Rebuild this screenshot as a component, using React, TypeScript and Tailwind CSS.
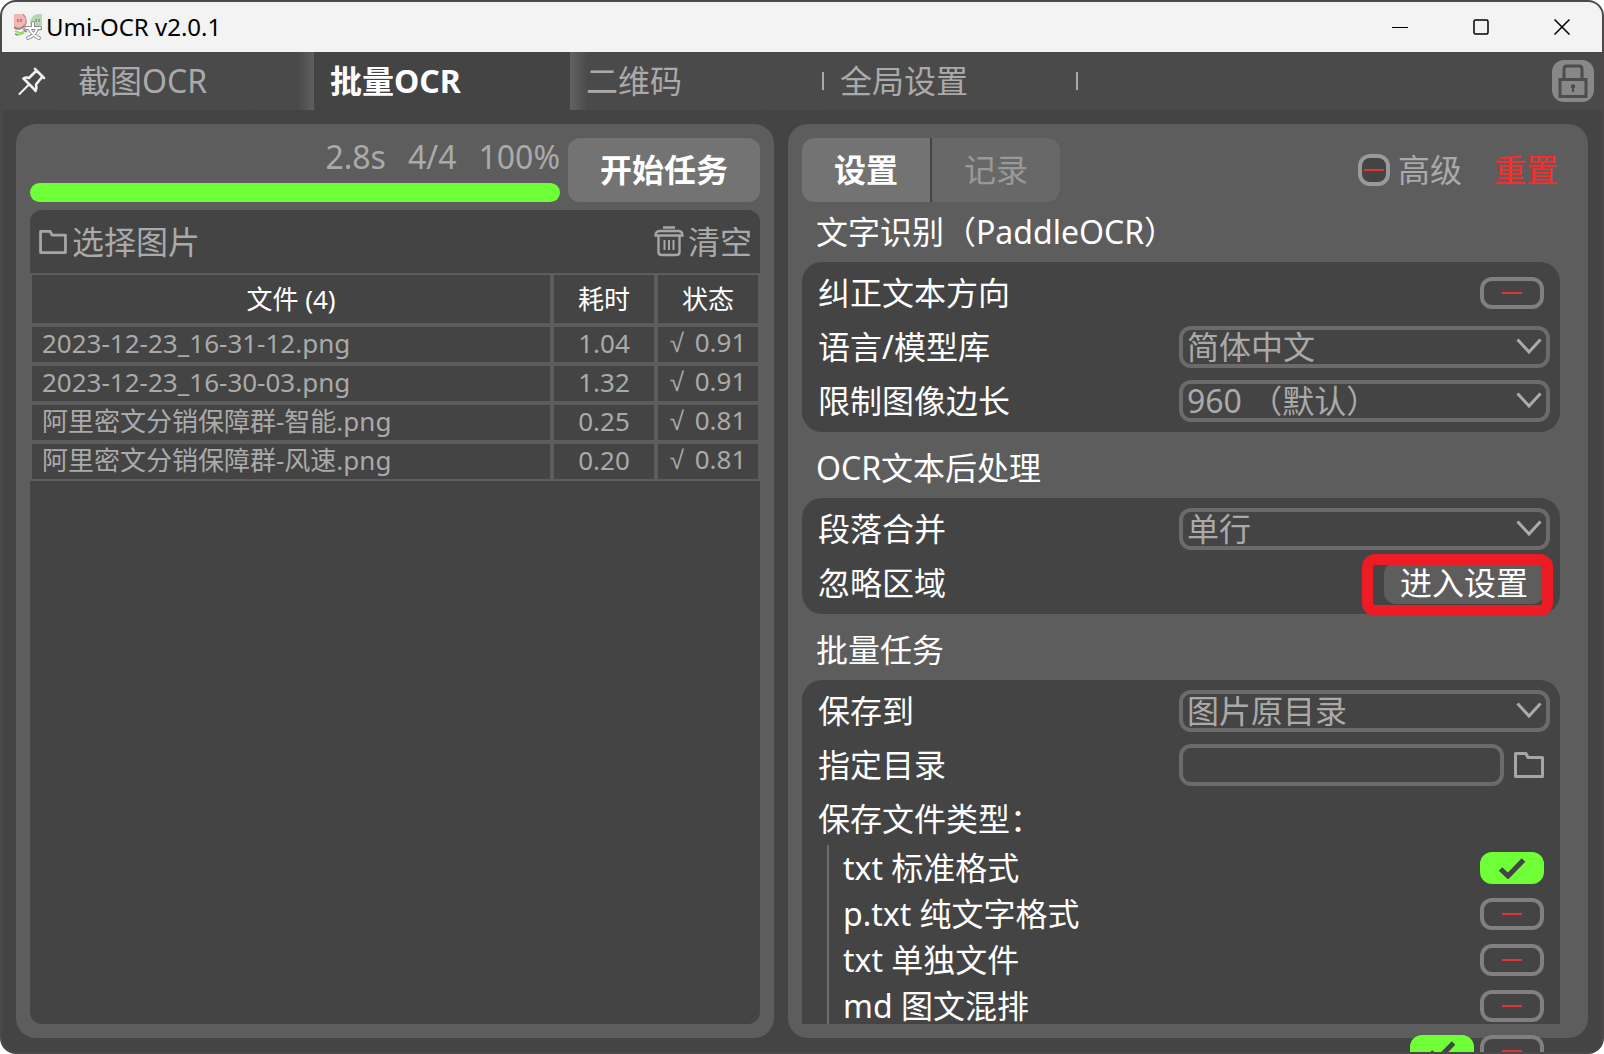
import { useState } from "react";
import type { ReactNode } from "react";
import clsx from "clsx";

const tabs = ["截图OCR", "批量OCR", "二维码", "全局设置"];

const files = [
  { name: "2023-12-23_16-31-12.png", time: "1.04", score: "0.91" },
  { name: "2023-12-23_16-30-03.png", time: "1.32", score: "0.91" },
  { name: "阿里密文分销保障群-智能.png", time: "0.25", score: "0.81" },
  { name: "阿里密文分销保障群-风速.png", time: "0.20", score: "0.81" },
];

const fileTypes = [
  { id: "txt", label: "txt 标准格式", on: true },
  { id: "ptxt", label: "p.txt 纯文字格式", on: false },
  { id: "single", label: "txt 单独文件", on: false },
  { id: "md", label: "md 图文混排", on: false },
];

function AppLogo() {
  return (
    <svg viewBox="0 0 28 26" className="h-[26px] w-7">
      <path d="M0 0h9c3 3 4 8 2 12-2 3-6 4-11 3z" fill="#f5b5b1" />
      <path d="M0 13c4 3 8 2 11-2" fill="none" stroke="#a07c78" strokeWidth="2" />
      <path d="M9 0c4 4 4 9 1 13" fill="none" stroke="#b98f8b" strokeWidth="1.2" />
      <path d="M28 0h-3c-6 0-9 5-9 9 1 4 5 6 12 7z" fill="#b3d8b2" />
      <path d="M17 12c3 4 7 4 11 3" fill="none" stroke="#7f9a80" strokeWidth="2" />
      <path d="M4 5v3M7 5v3" stroke="#8a6666" strokeWidth="1.2" />
      <path d="M22 5v3M25 5v3" stroke="#76917a" strokeWidth="1.2" />
      <path d="M1 17l5 2 6-2M4 21l6-2" stroke="#8edb63" strokeWidth="1.8" fill="none" />
      <path d="M1 20l3 1M9 15l4 3" stroke="#8d8080" strokeWidth="1.4" fill="none" />
      <g fill="none" strokeLinecap="round">
        <path d="M19 9v4M12 14h14M14 24c6-2 8-6 9-10M25 24c-5-2-8-6-10-10" stroke="#8e8e8e" strokeWidth="3.8" />
        <path d="M19 9v4M12 14h14M14 24c6-2 8-6 9-10M25 24c-5-2-8-6-10-10" stroke="#ffffff" strokeWidth="2" />
      </g>
    </svg>
  );
}

function PinIcon() {
  return (
    <svg viewBox="0 0 28 28" className="size-7" fill="none" stroke="#f2f2f2" strokeWidth="2.6" strokeLinejoin="round" strokeLinecap="round">
      <path d="M17 2l9 9M18.500 3.500L11 11M24.500 9.500L18 17.500M5.500 11.500c2-1.200 4-1.200 5.500-.5M5.500 11.500l12 12M18 17.500c.8 2.500.6 4.500-.5 6.500" />
      <path d="M11 17.500L1.500 27" strokeWidth="2" />
    </svg>
  );
}

function LockIcon() {
  return (
    <svg viewBox="0 0 30 34" className="h-[34px] w-[30px]" fill="none" stroke="#4d4d4d" strokeWidth="3">
      <path d="M6 15V5q0-3 3-3h12q3 0 3 3v10" />
      <path d="M2 15.500h26v17H2z" />
      <path d="M15 22v6" strokeWidth="2" />
      <circle cx="15" cy="22.500" r="1.500" fill="#4d4d4d" strokeWidth="1.500" />
    </svg>
  );
}

function FolderIcon({ className }: { className?: string }) {
  return (
    <svg viewBox="0 0 30 26" className={className} fill="none" stroke="#a6a6a6" strokeWidth="3">
      <path d="M1.500 24.500v-23h10.500l2 4h14.500v19z" strokeLinejoin="round" />
    </svg>
  );
}

function TrashIcon() {
  return (
    <svg viewBox="0 0 30 31" className="h-[31px] w-[30px]" fill="none" stroke="#a6a6a6" strokeWidth="2.400">
      <path d="M9 1.500h12M1.500 9.500Q1.500 5 6 5h18q4.500 0 4.500 4.500zM4.500 10v16q0 3 3 3h15q3 0 3-3V10" />
      <path d="M10.500 14v10M15 14v10M19.500 14v10" strokeWidth="2" />
    </svg>
  );
}

function Toggle({ id, label, defaultOn = false, square = false }: { id: string; label?: string; defaultOn?: boolean; square?: boolean }) {
  const [on, setOn] = useState(defaultOn);
  return (
    <span className={clsx("grid h-8 shrink-0 place-items-center", square ? "w-8" : "w-16")}>
      <input
        id={id}
        type="checkbox"
        aria-label={label}
        checked={on}
        onChange={(e) => setOn(e.target.checked)}
        className={clsx(
          "col-start-1 row-start-1 size-full appearance-none rounded-xl border-4",
          on ? "border-[#6eff36] bg-[#6eff36]" : "bg-[#444]",
          !on && (square ? "border-[#999]" : "border-[#808080]"),
        )}
      />
      {on ? (
        <svg viewBox="0 0 28 22" className="pointer-events-none col-start-1 row-start-1 h-[22px] w-7" fill="none" stroke="#444" strokeWidth="5">
          <path d="M2.500 12l7.500 7L25.500 3" />
        </svg>
      ) : (
        <span className="pointer-events-none col-start-1 row-start-1 h-0.5 w-5 bg-[#e03535]" />
      )}
    </span>
  );
}

function Picker({ id, options }: { id: string; options: string[] }) {
  return (
    <div className="relative w-[calc(50%+5px)]">
      <select id={id} className="block h-[42px] w-full appearance-none rounded-xl border-4 border-[#6b6b6b] bg-[#444] pl-1 text-[32px] leading-8 text-[#aaa] outline-none">
        {options.map((option) => <option key={option}>{option}</option>)}
      </select>
      <svg viewBox="0 0 26 17" className="pointer-events-none absolute top-3 right-2 h-[17px] w-[26px]" fill="none" stroke="#aaa" strokeWidth="3">
        <path d="M1.500 1.500L13 14 24.500 1.500" />
      </svg>
    </div>
  );
}

function Row({ htmlFor, label, wide, children }: { htmlFor?: string; label: string; wide?: boolean; children?: ReactNode }) {
  return (
    <div className={clsx("flex h-[54px] items-center justify-between pl-4", wide ? "pr-2.5" : "pr-4")}>
      <label htmlFor={htmlFor}>{label}</label>
      {children}
    </div>
  );
}

function Section({ title, first, children }: { title: string; first?: boolean; children: ReactNode }) {
  return (
    <section className={clsx(!first && "mt-1.5")}>
      <h2 className="flex h-[60px] items-center pl-3.5">{title}</h2>
      <div className="rounded-[20px] bg-[#444] pt-1 pb-1">{children}</div>
    </section>
  );
}

function TitleBar() {
  return (
    <header className="flex h-[50px] shrink-0 items-center bg-[#f3f3f3] pl-3 text-black">
      <AppLogo />
      <h1 className="ml-1 flex-1 text-2xl">Umi-OCR v2.0.1</h1>
      <button aria-label="最小化" className="grid h-full w-[81px] place-items-center">
        <svg viewBox="0 0 16 16" className="size-4"><path d="M0 8.500h16" stroke="#000" /></svg>
      </button>
      <button aria-label="最大化" className="grid h-full w-[81px] place-items-center">
        <svg viewBox="0 0 16 16" className="size-4"><rect x="1" y="1" width="14" height="14" rx="1.500" fill="none" stroke="#000" strokeWidth="1.500" /></svg>
      </button>
      <button aria-label="关闭" className="grid h-full w-[81px] place-items-center">
        <svg viewBox="0 0 16 16" className="size-4"><path d="M.5.500l15 15M15.500.500l-15 15" stroke="#000" strokeWidth="1.500" /></svg>
      </button>
    </header>
  );
}

function TabBar() {
  const [current, setCurrent] = useState(1);
  return (
    <nav className="flex h-[58px] shrink-0 items-center bg-[#4a4a4a] pr-2 text-[#aaa]">
      <button aria-label="置顶" className="grid h-full w-[60px] shrink-0 place-items-center">
        <PinIcon />
      </button>
      {tabs.map((tab, i) => (
        <button
          key={tab}
          onClick={() => setCurrent(i)}
          className={clsx(
            "flex h-full items-center justify-between whitespace-nowrap",
            i === current ? "-ml-0.5 w-64 bg-[#444] pl-4 font-bold text-white" : "w-[254px] pl-4",
            i === current - 1 && "bg-linear-to-l from-[#626262] to-[#4a4a4a] to-[18px]",
            i === current + 1 && "bg-linear-to-r from-[#626262] to-[#4a4a4a] to-[18px]",
          )}
        >
          {tab}
          {i > current && <span className="h-[18px] w-0.5 bg-[#aaa]" />}
        </button>
      ))}
      <button aria-label="锁定" className="ml-auto grid size-[42px] place-items-center rounded-xl bg-[#888]">
        <LockIcon />
      </button>
    </nav>
  );
}

function FilePanel() {
  return (
    <section className="flex min-w-0 flex-[730] flex-col gap-2 rounded-[20px] bg-[#5d5d5d] p-3.5">
      <div className="flex h-16 gap-2">
        <div className="flex flex-1 flex-col justify-between">
          <p className="flex h-[38px] items-center justify-end gap-[22px] text-[#aaa]">
            <span>2.8s</span>
            <span>4/4</span>
            <span>100%</span>
          </p>
          <div role="progressbar" aria-valuenow={100} className="h-[19px] rounded-full bg-[#6eff36]" />
        </div>
        <button className="rounded-xl bg-[#737373] px-8 font-bold text-white">开始任务</button>
      </div>

      <div className="flex-1 rounded-xl bg-[#444] text-[#aaa]">
        <div className="flex h-[63px] items-center justify-between px-2">
          <button className="flex items-center gap-1">
            <FolderIcon className="h-6 w-[30px]" />
            选择图片
          </button>
          <button className="flex items-center gap-1">
            <TrashIcon />
            清空
          </button>
        </div>
        <table className="w-full table-fixed border-separate border-spacing-0 text-[26px] leading-7">
          <thead>
            <tr className="h-[52px] text-white">
              <th className="border-2 border-[#5d5d5d] p-0 font-normal">文件 (4)</th>
              <th className="w-[104px] border-2 border-[#5d5d5d] p-0 font-normal">耗时</th>
              <th className="w-[104px] border-2 border-[#5d5d5d] p-0 font-normal">状态</th>
            </tr>
          </thead>
          <tbody>
            {files.map((file) => (
              <tr key={file.name} className="h-[39px]">
                <td className="border-2 border-[#5d5d5d] px-2.5 pt-0 pb-1 whitespace-nowrap">{file.name}</td>
                <td className="border-2 border-[#5d5d5d] px-0 pt-0 pb-1 text-center">{file.time}</td>
                <td className="border-2 border-[#5d5d5d] px-0 pt-0 pb-1 text-center whitespace-nowrap">
                  <span className="mr-1 font-['Liberation_Sans',sans-serif]">√</span> {file.score}
                </td>
              </tr>
            ))}
          </tbody>
        </table>
      </div>
    </section>
  );
}

function SettingsPanel() {
  return (
    <section className="flex min-w-0 flex-[758] flex-col rounded-[20px] bg-[#5d5d5d] py-3.5 pr-7 pl-3.5">
      <div className="flex h-16 shrink-0 items-center">
        <div className="flex h-full gap-0.5 overflow-hidden rounded-xl bg-[#444]">
          <button className="w-32 bg-[#737373] font-bold text-white">设置</button>
          <button className="w-32 bg-[#686868] text-[#999]">记录</button>
        </div>
        <div className="ml-auto flex items-center gap-2 text-[#aaa]">
          <Toggle id="advanced" square />
          <label htmlFor="advanced">高级</label>
        </div>
        <button className="mr-0.5 ml-8 text-[#ff2b2b]">重置</button>
      </div>

      <div className="min-h-0 flex-1 overflow-hidden text-white">
        <Section title="文字识别（PaddleOCR）" first>
          <Row label="纠正文本方向" htmlFor="direction">
            <Toggle id="direction" />
          </Row>
          <Row label="语言/模型库" htmlFor="language" wide>
            <Picker id="language" options={["简体中文", "English", "繁體中文", "日本語"]} />
          </Row>
          <Row label="限制图像边长" htmlFor="limit" wide>
            <Picker id="limit" options={["960 （默认）", "2880", "4320"]} />
          </Row>
        </Section>

        <Section title="OCR文本后处理">
          <Row label="段落合并" htmlFor="merge" wide>
            <Picker id="merge" options={["单行", "多行", "不做处理"]} />
          </Row>
          <Row label="忽略区域" htmlFor="ignore">
            <div className="relative">
              <button id="ignore" className="block h-[42px] rounded-xl bg-[#5d5d5d] px-4">进入设置</button>
              <span className="pointer-events-none absolute -top-2 -right-[9px] -bottom-3 -left-[22px] rounded-[13px] border-[11px] border-[#ed1c24]" />
            </div>
          </Row>
        </Section>

        <Section title="批量任务">
          <Row label="保存到" htmlFor="target" wide>
            <Picker id="target" options={["图片原目录", "指定目录"]} />
          </Row>
          <Row label="指定目录" htmlFor="folder" wide>
            <div className="flex w-[calc(50%+5px)] items-center gap-2.5 pr-1.5">
              <input id="folder" className="h-[42px] min-w-0 flex-1 rounded-xl border-4 border-[#6b6b6b] bg-transparent px-1 outline-none" />
              <button aria-label="浏览">
                <FolderIcon className="h-[26px] w-[30px]" />
              </button>
            </div>
          </Row>
          <Row label="保存文件类型：" />
          <div className="-mt-px mb-6 ml-[25px] border-l-2 border-[#6b6b6b]">
            {fileTypes.map((type) => (
              <div key={type.id} className="flex h-[46px] items-center justify-between pr-4 pl-3.5">
                <label htmlFor={type.id}>{type.label}</label>
                <Toggle id={type.id} defaultOn={type.on} />
              </div>
            ))}
          </div>
        </Section>
      </div>
    </section>
  );
}

export default function App() {
  return (
    <div lang="zh-CN" className="h-screen bg-white font-['Noto_Sans','Noto_Sans_CJK_SC',sans-serif] text-[32px] leading-9">
      <div className="relative flex h-full flex-col overflow-hidden rounded-2xl border-2 border-[#4b4949] bg-[#444]">
        <TitleBar />
        <TabBar />
        <main className="flex min-h-0 flex-1 gap-3.5 p-3.5">
          <FilePanel />
          <SettingsPanel />
        </main>
        {/* next row of toggles, cut off by the window edge */}
        <div className="absolute top-full right-[58px] -mt-[17px] flex gap-1.5">
          <Toggle id="extra-a" label="选项一" defaultOn />
          <Toggle id="extra-b" label="选项二" />
        </div>
      </div>
    </div>
  );
}
